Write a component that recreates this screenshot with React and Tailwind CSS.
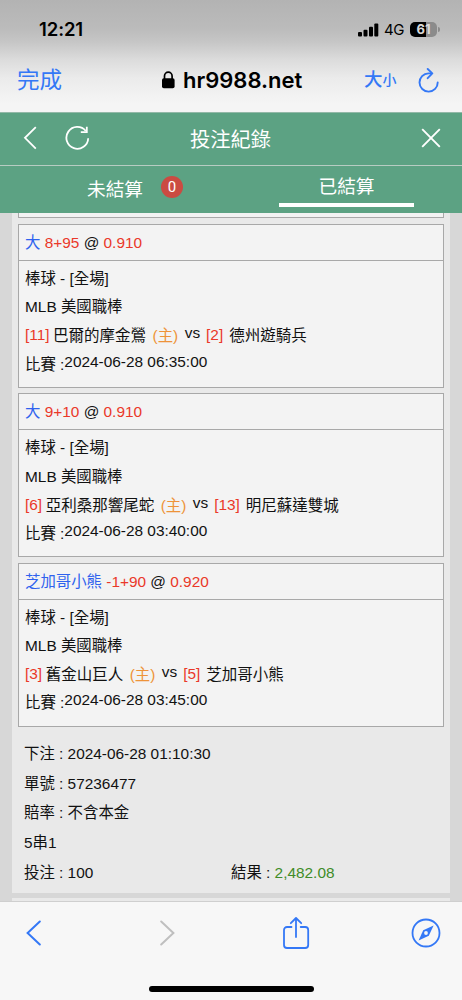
import clsx from 'clsx'

const bets = [
  {
    pick: '大',
    line: '8+95',
    odds: '0.910',
    homeNo: '[11]',
    home: '巴爾的摩金鶯',
    awayNo: '[2]',
    away: '德州遊騎兵',
    time: '2024-06-28 06:35:00',
  },
  {
    pick: '大',
    line: '9+10',
    odds: '0.910',
    homeNo: '[6]',
    home: '亞利桑那響尾蛇',
    awayNo: '[13]',
    away: '明尼蘇達雙城',
    time: '2024-06-28 03:40:00',
  },
  {
    pick: '芝加哥小熊',
    line: '-1+90',
    odds: '0.920',
    homeNo: '[3]',
    home: '舊金山巨人',
    awayNo: '[5]',
    away: '芝加哥小熊',
    time: '2024-06-28 03:45:00',
  },
]

function StatusBar() {
  return (
    <div className="flex h-[59px] items-center pl-[39px] font-['Inter']">
      <span className="w-[318px] text-[18.5px] font-semibold tracking-[-0.1px]">12:21</span>
      <svg className="h-[14px] w-[22px] shrink-0" viewBox="0 0 22 14">
        <rect x="1" y="9" width="4" height="4.6" rx="1" />
        <rect x="6.5" y="6.8" width="4" height="6.8" rx="1" />
        <rect x="12" y="3.8" width="4" height="9.8" rx="1" />
        <rect x="17.3" y="0.6" width="4" height="13" rx="1" />
      </svg>
      <span className="ml-[5px] w-[26px] text-[15px] leading-none tracking-[-0.4px]">4G</span>
      <div className="flex h-[15px] w-[27px] items-center justify-center rounded-[5px] bg-linear-to-r from-black from-60% to-[#8b8b8b] to-60% text-[13px] font-bold leading-none text-[#d9d9d9]">
        61
      </div>
      <div className="ml-px h-[5px] w-[1.5px] rounded-r-full bg-[#8b8b8b]" />
    </div>
  )
}

function AddressBar() {
  return (
    <div className="flex h-[42px] items-center pl-[17px]">
      <span className="w-[145px] pt-[2px] text-[22.5px] leading-none text-[#3478f6]">完成</span>
      <svg className="h-[18px] w-[13px] shrink-0" viewBox="0 0 13 18">
        <rect x="0" y="7.3" width="12.6" height="10" rx="1.8" />
        <path d="M2.5 8V5a3.8 3.8 0 0 1 7.6 0v3" fill="none" stroke="#000" strokeWidth="1.7" />
      </svg>
      <span className="ml-[8px] w-[181px] font-['Inter'] text-[22px] leading-none font-semibold">
        hr9988.net
      </span>
      <span className="flex w-[54px] items-end font-medium text-[#3478f6]">
        <span className="text-[18.5px] leading-none">大</span>
        <span className="text-[14px] leading-[17px]">小</span>
      </span>
      <svg className="h-[25px] w-[22px] shrink-0" viewBox="0 0 22 25" fill="none" stroke="#3478f6" strokeWidth="1.9" strokeLinecap="round" strokeLinejoin="round">
        <path d="M13.3 5.4H10.5A9.1 9.1 0 1 0 19.7 14.4" />
        <path d="M9.7 1l4.6 4.4-4.6 4.8" />
      </svg>
    </div>
  )
}

function NavBar() {
  return (
    <div className="flex h-[54px] items-center border-t border-b border-t-[#93b9a8] border-b-[#b7ccc2] pb-[2px] pl-[22.5px] text-white">
      <svg className="h-[24px] w-[14px] shrink-0" viewBox="0 0 14 24" fill="none" stroke="currentColor" strokeWidth="1.8">
        <path d="M12.8 1.2L2 11.8l10.8 10.8" />
      </svg>
      <svg className="ml-[28.5px] h-[26px] w-[25px] shrink-0" viewBox="0 0 25 26" fill="none" stroke="currentColor" strokeWidth="1.8">
        <path d="M20.8 6A10.9 10.9 0 1 0 23.2 13.2" />
        <path d="M21.8 1.7V7.2h-6" />
      </svg>
      <h1 className="ml-[100px] w-[231px] pt-[5px] text-[20.3px] leading-none">投注紀錄</h1>
      <svg className="h-[20px] w-[20px] shrink-0" viewBox="0 0 20 20" fill="none" stroke="currentColor" strokeWidth="1.9">
        <path d="M1.2 1.2l17.6 17.6M18.8 1.2L1.2 18.8" />
      </svg>
    </div>
  )
}

function Tabs() {
  return (
    <div className="flex h-[47px] text-[18.7px] leading-none text-white">
      <div className="flex w-[231px] items-start pl-[87px]">
        <span className="pt-[15px]">未結算</span>
        <span className="mt-[10px] ml-[18px] flex h-[22px] w-[22px] items-center justify-center rounded-full bg-[#cb4b42] font-['Roboto'] text-[15px]">
          0
        </span>
      </div>
      <div className="flex flex-1 justify-center">
        <div className="h-[41px] w-[135px] border-b-[4px] border-white pt-[12px] text-center">
          已結算
        </div>
      </div>
    </div>
  )
}

function BetCard({ bet }) {
  return (
    <div className="mb-[5.4px] h-[164px] shrink-0 border-[1.5px] border-[#a8a8a8] bg-[#f3f3f3] leading-[28.2px]">
      <div className="h-[36px] border-b border-[#a8a8a8] pl-[6px] leading-[35px]">
        <span className="text-[#2f62ee]">{bet.pick}</span>{' '}
        <span className="text-[#ea3829]">{bet.line}</span> @{' '}
        <span className="text-[#ea3829]">{bet.odds}</span>
      </div>
      <div className="pt-[4px] pl-[6px]">
        <div>棒球 - [全場]</div>
        <div>MLB 美國職棒</div>
        <div className="flex whitespace-nowrap">
          <span className="text-[#ea3829]">{bet.homeNo}</span>
          <span className="ml-[3.5px] pt-px text-[15.5px]">{bet.home}</span>
          <span className="ml-[6.5px] pt-px text-[#ee9339]">(主)</span>
          <span className="-mt-[2px] ml-[6.5px]">vs</span>
          <span className="ml-[6px] text-[#ea3829]">{bet.awayNo}</span>
          <span className="ml-[6px] pt-px text-[15.5px]">{bet.away}</span>
        </div>
        <div className="-mt-px flex">
          <span className="pt-px">比賽 :</span>
          <span className="-mt-[2px]">{bet.time}</span>
        </div>
      </div>
    </div>
  )
}

function Summary() {
  return (
    <div className="pt-[7px] pl-[6px] leading-[29.6px]">
      <div>下注 : 2024-06-28 01:10:30</div>
      <div>單號 : 57236477</div>
      <div>賠率 : 不含本金</div>
      <div>5串1</div>
      <div className="flex">
        <span className="w-[207px]">投注 : 100</span>
        <span>
          結果 : <span className="text-[#3f8c28]">2,482.08</span>
        </span>
      </div>
    </div>
  )
}

function Toolbar() {
  return (
    <div className="h-[99px] border-t border-[#cfcfcf] bg-[#f7f7f7]">
      <div className="flex h-[62px] items-center pl-[26px] text-[#3478f6]">
        <Chevron />
        <Chevron className="ml-[119px] rotate-180 text-[#bfbfbf]" />
        <svg className="ml-[107px] h-[34px] w-[28px] shrink-0" viewBox="0 0 28 34" fill="none" stroke="currentColor" strokeWidth="1.8" strokeLinecap="round" strokeLinejoin="round">
          <path d="M9.5 11H5a3 3 0 0 0-3 3v15a3 3 0 0 0 3 3h18.2a3 3 0 0 0 3-3V14a3 3 0 0 0-3-3h-4.5" />
          <path d="M14 21V2.2M8.8 7.2L14 2l5.2 5.2" />
        </svg>
        <svg className="ml-[101px] h-[30px] w-[30px] shrink-0" viewBox="0 0 30 30">
          <circle cx="15" cy="15" r="13.5" fill="none" stroke="currentColor" strokeWidth="1.8" />
          <path d="M22.6 7.6L17.8 17.8 7.6 22.4l4.6-10.2z" fill="currentColor" />
          <circle cx="15" cy="15" r="1.9" fill="#f7f7f7" />
        </svg>
      </div>
      <div className="mx-auto mt-[22px] h-[6px] w-[165px] rounded-full bg-black" />
    </div>
  )
}

function Chevron({ className }) {
  return (
    <svg className={clsx('h-[26px] w-[15px] shrink-0', className)} viewBox="0 0 15 26" fill="none" stroke="currentColor" strokeWidth="2" strokeLinecap="round">
      <path d="M13.8 1.5L1.6 13l12.2 11.5" />
    </svg>
  )
}

export default function App() {
  return (
    <div className="flex h-[1000px] w-[462px] flex-col overflow-hidden bg-[#d7d7d7] font-['Liberation_Sans','Noto_Sans_CJK_TC',sans-serif] text-[15.4px] text-[#111]">
      <div className="h-[112px] bg-[linear-gradient(#b3b3b3_0,#bbbbbb_28px,#c6c6c6_42px,#dcdcdc_60px,#ebebeb_78px,#f5f5f5_104px)] text-black">
        <StatusBar />
        <AddressBar />
      </div>
      <header className="bg-[#5ca283]">
        <NavBar />
        <Tabs />
      </header>
      <main className="flex h-[688px] flex-col overflow-hidden pr-[19px] pl-[12px]">
        <div className="-mr-[7px] h-[680px] shrink-0 bg-[#e9e9e9] px-[6px]">
          <div className="mb-[6px] h-[5px] border-x-[1.5px] border-b-[1.5px] border-[#a8a8a8] bg-[#f3f3f3]" />
          {bets.map((bet) => (
            <BetCard key={bet.time} bet={bet} />
          ))}
          <Summary />
        </div>
        <div className="mt-[5px] -mr-[7px] h-[3px] shrink-0 bg-[#e9e9e9]" />
      </main>
      <Toolbar />
    </div>
  )
}
